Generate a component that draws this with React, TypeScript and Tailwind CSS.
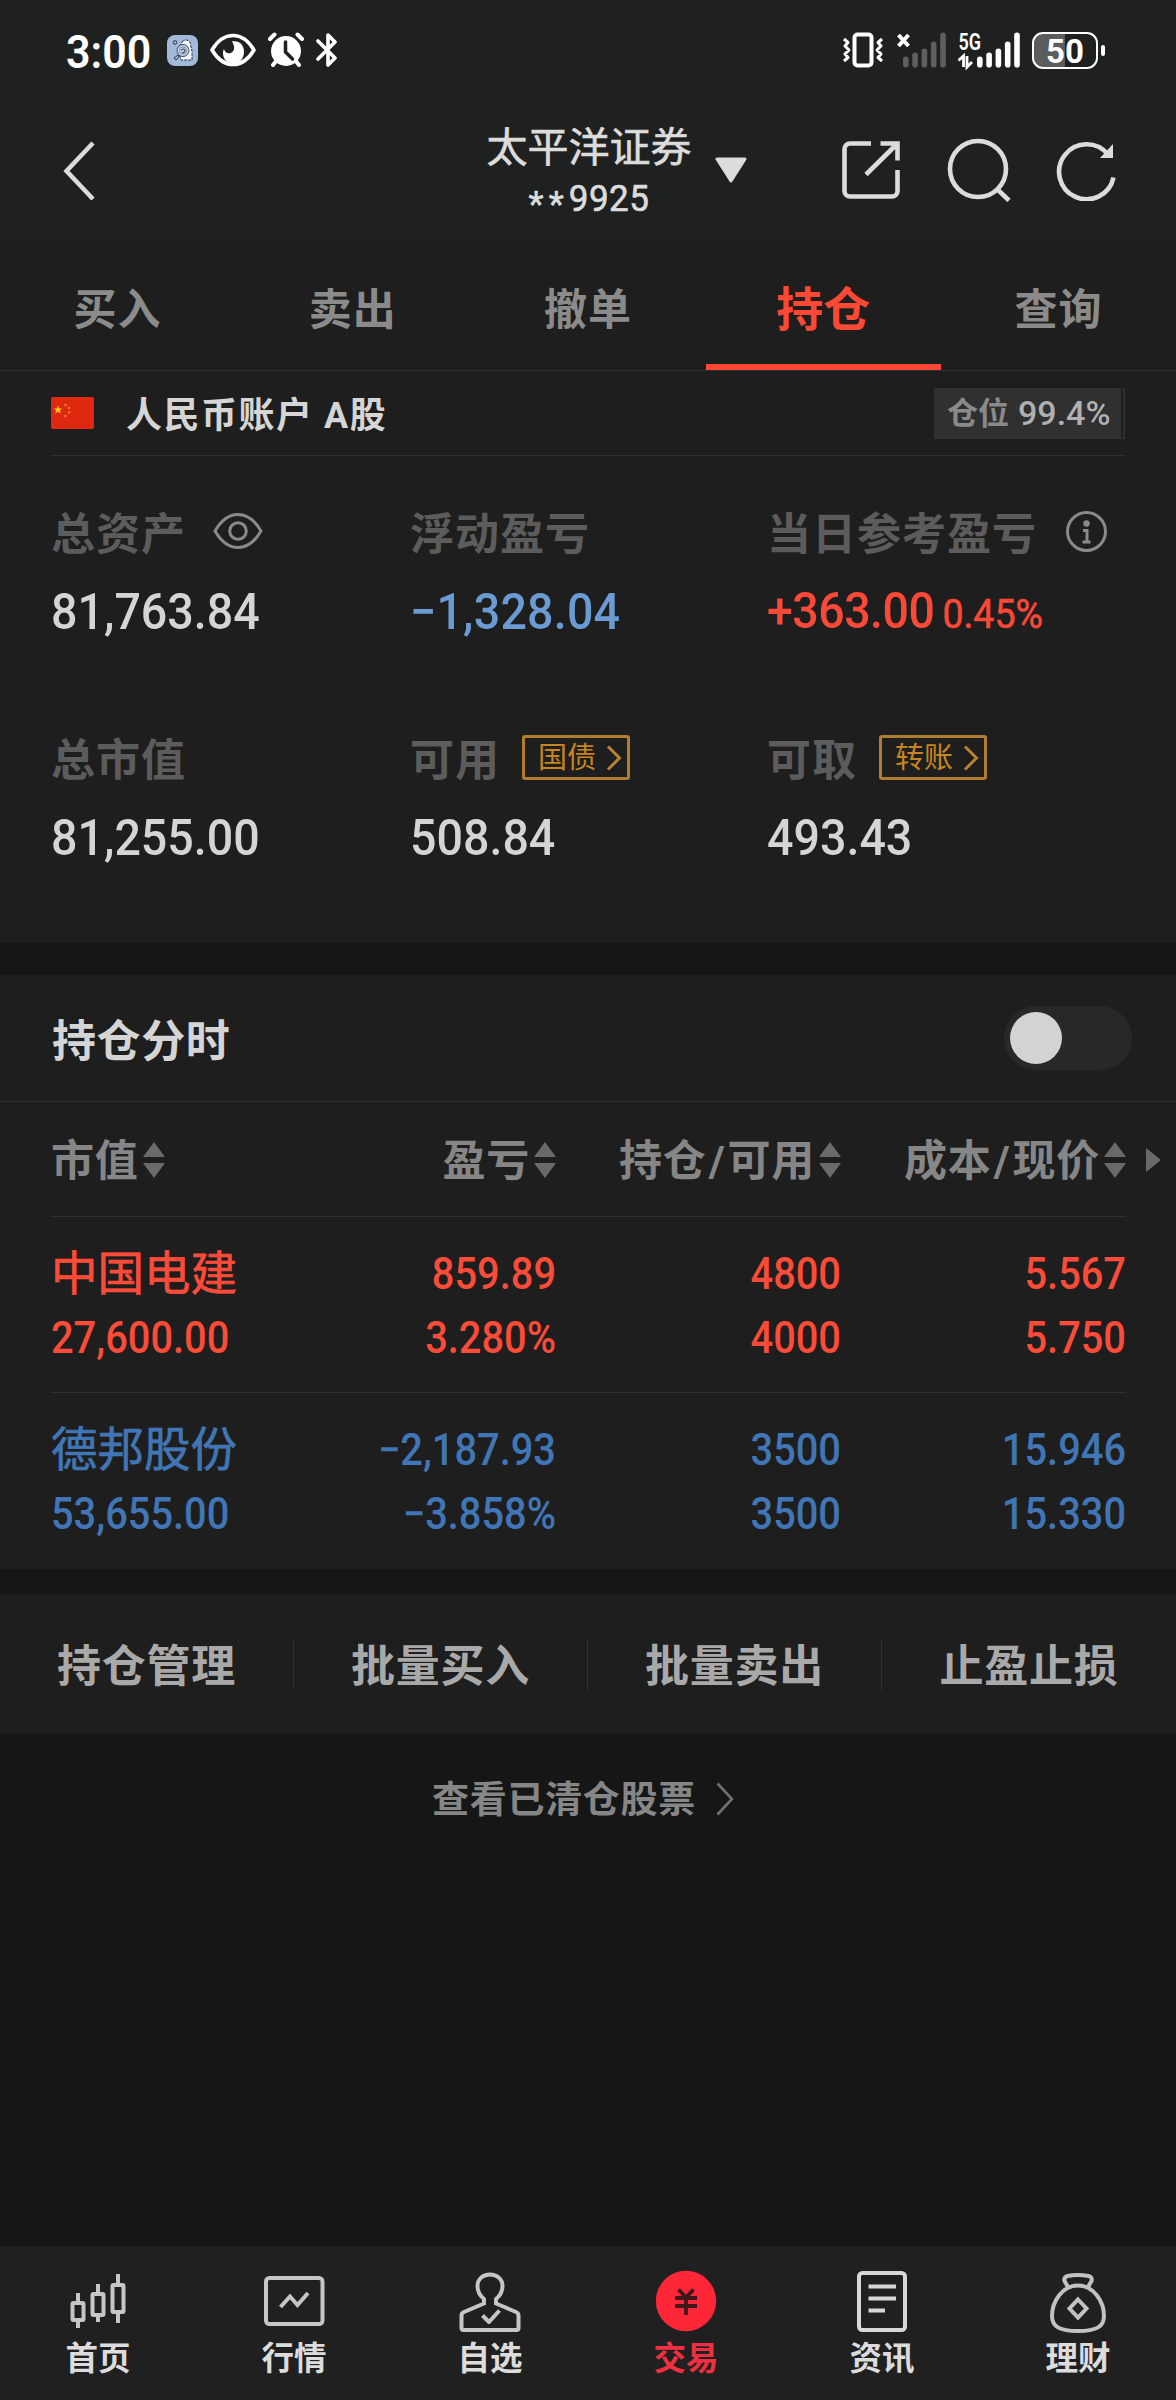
import React from "react";

const tabs = ["买入", "卖出", "撤单", "持仓", "查询"];

const columns = [["市值"], ["盈亏"], ["持仓", "可用"], ["成本", "现价"]];

const holdings = [
	{
		name: "中国电建",
		value: "27,600.00",
		cells: [
			["859.89", "3.280%"],
			["4800", "4000"],
			["5.567", "5.750"],
		],
		color: "text-[#fb4b39]",
	},
	{
		name: "德邦股份",
		value: "53,655.00",
		cells: [
			["−2,187.93", "−3.858%"],
			["3500", "3500"],
			["15.946", "15.330"],
		],
		color: "text-[#4076b5]",
	},
];

const actions = ["持仓管理", "批量买入", "批量卖出", "止盈止损"];

const SignalBars = ({ color }: { color: string }) => (
	<g fill={color}>
		<rect x="0" y="24" width="5.6" height="11" rx="2.8" />
		<rect x="9.3" y="20" width="5.6" height="15" rx="2.8" />
		<rect x="18.6" y="16" width="5.6" height="19" rx="2.8" />
		<rect x="27.9" y="9" width="5.6" height="26" rx="2.8" />
		<rect x="37.2" y="0" width="5.6" height="35" rx="2.8" />
	</g>
);

const StatusBar = () => (
	<div className="flex h-[100px] items-center justify-between pl-[66px] pr-[71px] text-white">
		<div className="flex items-center">
			<span className="w-[101px] scale-y-[1.06] pt-1 text-[43px] font-semibold leading-none">
				3:00
			</span>
			<svg width="31" height="31" viewBox="0 0 31 31">
				<rect width="31" height="31" rx="8" fill="#a3b9da" />
				<path d="M15 7q4-4 8 0l2 9v9H14l-1-3 1-3-1-8z" fill="#f2f5fa" stroke="#26344c" strokeWidth="1" strokeDasharray="3 1" />
				<circle cx="16" cy="15.500" r="6" fill="#c3d1e6" stroke="#3a4964" strokeWidth="1" />
				<circle cx="16" cy="15.500" r="3.500" fill="none" stroke="#6b7b98" strokeWidth="0.800" />
				<path d="M14 15q3-2 4 0t-3 3M7 23l4-3 1 2-3 3z" fill="none" stroke="#26344c" strokeWidth="1" />
				<circle cx="8" cy="7.500" r="1.800" fill="none" stroke="#26344c" />
			</svg>
			<svg className="ml-3" width="46" height="34" viewBox="0 0 46 34">
				<path
					d="M2 17C8 7 15 2.500 23 2.500S38 7 44 17C38 27 31 31.500 23 31.500S8 27 2 17z"
					fill="none"
					stroke="white"
					strokeWidth="3.6"
					strokeLinejoin="round"
				/>
				<path
					d="M22 8.500c8-1 12 4 12 10.500 0 7-5 11.500-11 11.500S13 26 13 20c0-2 .5-3 1-4 1 4 4 5 7 4 4-2 4-7 1-11.500z"
					fill="white"
				/>
			</svg>
			<svg className="ml-3" width="36" height="36" viewBox="0 0 36 36">
				<path d="M2 7l4.500-4.500M34 7l-4.500-4.500M5 33l4-5M31 33l-4-5" stroke="white" strokeWidth="4" strokeLinecap="round" />
				<circle cx="18" cy="19" r="15" fill="white" />
				<path d="M17.500 10v10l7 7" fill="none" stroke="#1f2120" strokeWidth="3.5" strokeLinecap="round" strokeLinejoin="round" />
			</svg>
			<svg className="ml-3" width="22" height="36" viewBox="0 0 22 36">
				<path
					d="M2 9l17 17-7 7V3l7 7L2 27"
					fill="none"
					stroke="white"
					strokeWidth="3.6"
					strokeLinecap="round"
					strokeLinejoin="round"
				/>
			</svg>
		</div>
		<div className="flex items-center">
			<svg width="42" height="36" viewBox="0 0 42 36">
				<rect x="12.500" y="2.500" width="17" height="31" rx="3" fill="none" stroke="white" strokeWidth="4" />
				<path
					d="M2 7l4 3.500-3 3.500 4 4-4 4 3 3.500-4 3.500M40 7l-4 3.500 3 3.500-4 4 4 4-3 3.500 4 3.500"
					fill="none"
					stroke="white"
					strokeWidth="3"
					strokeLinejoin="round"
				/>
			</svg>
			<svg className="ml-3" width="50" height="36" viewBox="0 0 50 36">
				<path d="M2.500 3l10 11M12.500 3l-10 11" stroke="white" strokeWidth="4" />
				<g transform="translate(7 0.5)">
					<SignalBars color="#5d5f5e" />
				</g>
			</svg>
			<svg className="ml-3" width="63" height="50" viewBox="0 -7 63 50">
				<text
					x="0.500"
					y="17.500"
					fill="white"
					fontFamily="Roboto"
					fontWeight="600"
					fontSize="23"
					textLength="22.500"
					lengthAdjust="spacingAndGlyphs">
					5G
				</text>
				<path d="M0.500 28.500l5-4.500v11M9 24v11l5-5" fill="none" stroke="white" strokeWidth="2.800" />
				<g transform="translate(19 0.5)">
					<SignalBars color="white" />
				</g>
			</svg>
			<div className="ml-[11px] flex h-[37px] w-[66px] items-center justify-center rounded-[11px] border-[2.500px] border-white bg-[linear-gradient(90deg,#5b5d5c_50%,transparent_50%)]">
				<span className="pt-0.5 text-[33px] font-bold leading-none">50</span>
			</div>
			<div className="ml-[3px] h-[11px] w-1 rounded-full bg-white" />
		</div>
	</div>
);

const Header = () => (
	<div className="flex h-[142px] items-center pb-0.5 text-[#dcdcdc]">
		<svg className="ml-[62px]" width="34" height="60" viewBox="0 0 34 60" fill="none">
			<path d="M31 3L4.500 31 31 59" stroke="currentColor" strokeWidth="4.500" />
		</svg>
		<div className="ml-[388px] flex w-[210px] flex-col items-center pt-2">
			<span className="text-[41px] leading-[49px] [-webkit-text-stroke:0.6px_currentColor]">
				太平洋证券
			</span>
			<span className="flex text-[35px] leading-[52px] tracking-[0.3px] [-webkit-text-stroke:0.6px_currentColor]">
				<span className="translate-y-[6px] tracking-[5px]">**</span>
				<span className="scale-y-[1.07] tracking-[0.500px]">9925</span>
			</span>
		</div>
		<svg className="ml-[21px]" width="32" height="27" viewBox="0 0 32 27">
			<path d="M2 2h28L16 24z" fill="currentColor" stroke="currentColor" strokeWidth="3" strokeLinejoin="round" />
		</svg>
		<svg className="ml-[95px]" width="58" height="58" viewBox="0 0 58 58" fill="none" stroke="currentColor" strokeWidth="4.600">
			<path d="M29 2.500H8A5.500 5.500 0 0 0 2.500 8V50A5.500 5.500 0 0 0 8 55.500H50A5.500 5.500 0 0 0 55.500 50V29" />
			<path d="M38.500 2.500H55.500V19.500M55 3L24 33.500" />
		</svg>
		<svg className="ml-[47px]" width="64" height="64" viewBox="0 0 64 64" fill="none" stroke="currentColor" strokeWidth="4.600">
			<circle cx="31" cy="31" r="28" />
			<path d="M50 51l12 11.500" />
		</svg>
		<svg className="ml-[45px]" width="60" height="62" viewBox="0 0 60 62">
			<path d="M52 15.500A27.500 27.500 0 1 0 57.500 38.500" fill="none" stroke="currentColor" strokeWidth="4.600" />
			<path d="M57 5v14H44z" fill="currentColor" />
		</svg>
	</div>
);

const Sorter = () => (
	<svg className="ml-1 mt-px" width="22" height="36" viewBox="0 0 22 36" fill="#6a6a6a">
		<path d="M11 0l11 15H0zM11 36L0 21h22z" />
	</svg>
);

const Stat = ({
	label,
	extra,
	children,
}: {
	label: string;
	extra?: React.ReactNode;
	children: React.ReactNode;
}) => (
	<div>
		<div className="flex h-[46px] items-center">
			<span className="pt-1 text-[44px] font-bold leading-none tracking-[1px] text-[#5c5c5c]">
				{label}
			</span>
			{extra}
		</div>
		<div className="mt-[30px] flex h-[52px] origin-center scale-y-[1.09] items-baseline whitespace-nowrap text-[46.600px] font-medium leading-[52px] text-[#d5d5d5]">
			{children}
		</div>
	</div>
);

const Tag = ({ children }: { children: React.ReactNode }) => (
	<span className="-mt-[3px] ml-[22px] flex h-[45px] w-[108px] items-center justify-between rounded-[3px] border-[3px] border-[#b07c30] pl-[13px] pr-[5px] text-[29px] leading-none text-[#c8851f]">
		<span className="pt-0.5">{children}</span>
		<svg width="16" height="26" viewBox="0 0 16 26" fill="none">
			<path d="M2 1.500L13.500 13 2 24.500" stroke="#b98233" strokeWidth="3" />
		</svg>
	</span>
);

const navItems = [
	{
		label: "首页",
		icon: (
			<g fill="none" stroke="#c6c6c6" strokeWidth="4">
				<rect x="6.500" y="33" width="11" height="17" rx="1" />
				<rect x="26.500" y="24" width="11" height="21" rx="1" />
				<rect x="46.500" y="15" width="11" height="27" rx="1" />
				<path d="M12 23v9M12 51v7M32 14v9M32 46v6M52 4v10M52 43v10" />
			</g>
		),
	},
	{
		label: "行情",
		icon: (
			<g fill="none" stroke="#c6c6c6" strokeWidth="4">
				<rect x="4" y="8" width="56.500" height="46" rx="3.500" />
				<path d="M18.500 37l9.500-10.500 7.500 8.500 10.500-12" />
			</g>
		),
	},
	{
		label: "自选",
		icon: (
			<g fill="none" stroke="#c6c6c6" strokeWidth="4" strokeLinejoin="round">
				<path d="M26 35v-6C21 25 19.500 21 19.500 16 19.500 9 25 4.500 32 4.500S44.500 9 44.500 16c0 5-1.500 9-6.500 13v6M26 33.500L6 42q-2.500 1-2.500 3.500V58q0 2 2 2h53q2 0 2-2V45.500q0-2.500-2.500-3.500L38 33.500" />
				<path d="M24.500 45.500l6.500 6.500 10.500-11.500" />
			</g>
		),
	},
	{
		label: "交易",
		active: true,
		icon: (
			<>
				<circle cx="32" cy="31" r="30.200" fill="#ff2638" />
				<path d="M24.500 19.500L32 27.500l7.500-8M21 28h22M21 36h22M32 27v18" fill="none" stroke="#40171b" strokeWidth="3.800" />
			</>
		),
	},
	{
		label: "资讯",
		icon: (
			<g fill="none" stroke="#d8d8d8" strokeWidth="4">
				<rect x="9" y="3" width="46" height="57" rx="3.500" />
				<path d="M18.500 16.500H46M18.500 28.500H46M18.500 40.500H35" />
			</g>
		),
	},
	{
		label: "理财",
		icon: (
			<g fill="none" stroke="#c2c2c2" strokeWidth="4" strokeLinejoin="round">
				<path d="M22 17l-3.500-6q-1-4 3-5 10-2 21 0 4 1 3 5L42 17" />
				<path d="M32 15.500C16 15.500 6 32 6 46c0 11 8 15 26 15s26-4 26-15c0-14-10-30.500-26-30.500z" />
				<path d="M32 29.500l8.500 9-8.500 9-8.500-9z" strokeLinejoin="miter" />
			</g>
		),
	},
];

const App = () => {
	return (
		<div className="flex h-[2400px] w-[1176px] flex-col overflow-hidden bg-[#161616] font-[Roboto,'Noto_Sans_CJK_SC',sans-serif]">
			<header className="bg-[#1f2120]">
				<StatusBar />
				<Header />
			</header>

			{/* Trade tabs */}
			<nav className="flex h-[129px] border-b border-[#303030] bg-[#1e1e1e]">
				{tabs.map((tab) => (
					<div
						key={tab}
						className={
							tab === "持仓"
								? "flex flex-1 items-center justify-center border-b-[6px] border-[#fc4835] pt-3 text-[47px] font-bold leading-none text-[#fc4835]"
								: "flex flex-1 items-center justify-center pt-2 text-[43px] font-bold leading-none tracking-[1px] text-[#8b8b8b]"
						}>
						{tab}
					</div>
				))}
			</nav>

			{/* Account summary */}
			<section className="h-[572px] bg-[#1e1e1e] px-[51px]">
				<div className="flex h-[85px] items-center border-b border-[#303030]">
					<svg width="43" height="32" viewBox="0 0 43 32">
						<rect width="43" height="32" rx="2" fill="#de2910" />
						<path d="M7 8.500l1.200 3h3l-2.400 2 1 3L7 14.700 4.200 16.500l1-3-2.400-2h3z" fill="#ffc21c" />
						<g fill="#f4772a">
							<circle cx="14.500" cy="8" r="1.300" />
							<circle cx="18" cy="11" r="1.300" />
							<circle cx="18" cy="15.500" r="1.300" />
							<circle cx="14.500" cy="19" r="1.300" />
						</g>
					</svg>
					<span className="ml-[32px] pt-1.5 text-[36px] font-bold leading-none tracking-[1.500px] text-[#d5d5d5]">
						人民币账户 A股
					</span>
					<div className="ml-auto flex h-[51px] w-[191px] items-center bg-[#303030] pl-[13px] leading-none">
						<span className="text-[31px] font-bold text-[#8a8a8a]">仓位</span>
						<span className="ml-[9px] text-[34px] font-medium text-[#b0b0b0]">99.4%</span>
						<span className="ml-auto mr-0.5 h-[49px] w-0.5 bg-[#1e1e1e]" />
					</div>
				</div>
				<div className="grid grid-cols-[359px_357px_1fr] gap-y-[98px] pt-[54px]">
					<Stat
						label="总资产"
						extra={
							<svg className="-mt-1 ml-[27px]" width="50" height="38" viewBox="0 0 50 38" fill="none" stroke="#8a8a8a" strokeWidth="3">
								<path d="M2 19C9 7 17 2.500 25 2.500S41 7 48 19C41 31 33 35.500 25 35.500S9 31 2 19z" />
								<circle cx="25" cy="19" r="8.300" />
							</svg>
						}>
						81,763.84
					</Stat>
					<Stat label="浮动盈亏">
						<span className="tracking-[0.2px] text-[#6b9bd3]">−1,328.04</span>
					</Stat>
					<Stat
						label="当日参考盈亏"
						extra={
							<svg className="-mt-1 ml-[29px]" width="41" height="41" viewBox="0 0 41 41" fill="none" stroke="#8a8a8a">
								<circle cx="20.500" cy="20.500" r="19" strokeWidth="3" />
								<circle cx="20.500" cy="12.500" r="3.200" fill="#8a8a8a" stroke="none" />
								<path d="M17 19.500h4v11M16.500 31h8" strokeWidth="3" />
							</svg>
						}>
						<span className="-translate-y-px text-[46.500px] tracking-[-0.5px] text-[#fb4938]">+363.00</span>
						<span className="ml-2 -translate-y-px text-[37.500px] font-normal text-[#fb4938] [-webkit-text-stroke:0.5px_currentColor]">
							0.45%
						</span>
					</Stat>
					<Stat label="总市值">81,255.00</Stat>
					<Stat label="可用" extra={<Tag>国债</Tag>}>
						508.84
					</Stat>
					<Stat label="可取" extra={<Tag>转账</Tag>}>
						493.43
					</Stat>
				</div>
			</section>

			{/* Holdings */}
			<section className="mt-[32px] h-[594px] bg-[#1e1e1e]">
				<div className="flex h-[127px] items-center justify-between border-b border-[#303030] pl-[52px] pr-[44px]">
					<span className="pt-2 text-[44px] font-bold leading-none tracking-[0.600px] text-[#d5d5d5]">
						持仓分时
					</span>
					<div className="flex h-[64px] w-[128px] items-center rounded-full bg-[#282828] pl-1.5">
						<div className="h-[52px] w-[52px] rounded-full bg-[#d3d3d3]" />
					</div>
				</div>
				<div className="flex h-[115px] items-center pl-[51px]">
					<div className="grid h-full grid-cols-[230px_275px_285px_285px] items-center border-b border-[#303030]">
						{columns.map(([first, second], index) => (
							<div
								key={first}
								className={`flex items-center text-[43px] font-bold leading-none tracking-[0.800px] text-[#868686] ${
									index > 0 ? "justify-end" : ""
								}`}>
								<span className="pt-1">
									{first}
									{second && <span className="mx-0.5">/</span>}
									{second}
								</span>
								<Sorter />
							</div>
						))}
					</div>
					<svg className="ml-5" width="15" height="24" viewBox="0 0 15 24">
						<path d="M0 0l15 12L0 24z" fill="#6a6a6a" />
					</svg>
				</div>
				{holdings.map((stock, row) => (
					<div
						key={stock.name}
						className={`mx-[51px] grid h-[176px] w-[1075px] grid-cols-[230px_275px_285px_285px] pt-[26px] text-[39.800px] font-medium leading-[64px] ${stock.color} ${
							row === 0 ? "border-b border-[#303030]" : ""
						}`}>
						<div className="whitespace-nowrap">
							<div className="-translate-y-px text-[46.500px] font-normal [-webkit-text-stroke:0.7px_currentColor]">
								{stock.name}
							</div>
							<div className="scale-y-[1.11]">{stock.value}</div>
						</div>
						{stock.cells.map(([top, bottom], i) => (
							<div key={i} className="text-right">
								<div className="scale-y-[1.11]">{top}</div>
								<div className="scale-y-[1.11]">{bottom}</div>
							</div>
						))}
					</div>
				))}
			</section>

			<section className="mt-[25px] flex h-[140px] items-center bg-[#1e1e1e]">
				{actions.map((action, index) => (
					<div
						key={action}
						className={`flex h-[51px] w-[294px] items-center justify-center pt-1.5 text-[44px] font-bold leading-none tracking-[0.800px] text-[#a9a9a9] ${
							index < 3 ? "border-r border-[#333333]" : ""
						}`}>
						{action}
					</div>
				))}
			</section>

			<div className="mt-[40px] flex h-[50px] items-center justify-center pr-2.5 text-[37px] font-bold leading-none tracking-[0.700px] text-[#868686]">
				<span className="pt-0.5">查看已清仓股票</span>
				<svg className="ml-5" width="18" height="34" viewBox="0 0 18 34" fill="none">
					<path d="M1.500 1.500L16 17 1.500 32.500" stroke="#707070" strokeWidth="2.600" />
				</svg>
			</div>

			{/* Bottom navigation */}
			<footer className="mt-auto grid h-[154px] grid-cols-6 bg-[#202020] pt-6">
				{navItems.map((item) => (
					<div key={item.label} className="flex flex-col items-center">
						<svg width="64" height="64" viewBox="0 0 64 64">
							{item.icon}
						</svg>
						<span
							className={`mt-[9px] text-[32.500px] font-bold leading-none ${
								item.active ? "text-[#f03040]" : "text-[#dcdcdc]"
							}`}>
							{item.label}
						</span>
					</div>
				))}
			</footer>
		</div>
	);
};

export default App;
